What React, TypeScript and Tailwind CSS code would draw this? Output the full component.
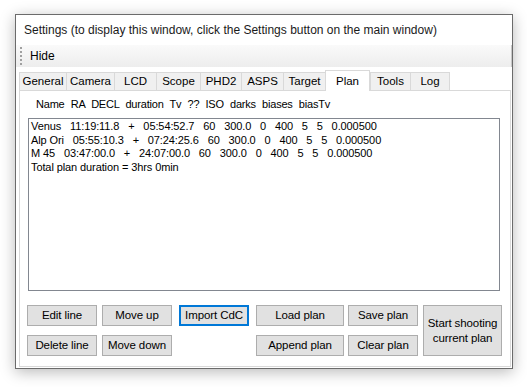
import React from "react";

const tabs: { label: string; w: number }[] = [
  { label: "General", w: 47 },
  { label: "Camera", w: 48 },
  { label: "LCD", w: 42 },
  { label: "Scope", w: 44 },
  { label: "PHD2", w: 41 },
  { label: "ASPS", w: 42 },
  { label: "Target", w: 42 },
  { label: "Plan", w: 45 },
  { label: "Tools", w: 40 },
  { label: "Log", w: 40 },
];

const lines = [
  "Venus   11:19:11.8   +   05:54:52.7   60   300.0   0   400   5   5   0.000500",
  "Alp Ori   05:55:10.3   +   07:24:25.6   60   300.0   0   400   5   5   0.000500",
  "M 45   03:47:00.0   +   24:07:00.0   60   300.0   0   400   5   5   0.000500",
  "Total plan duration = 3hrs 0min",
];

function Btn({
  children,
  className = "",
  focused = false,
}: {
  children: React.ReactNode;
  className?: string;
  focused?: boolean;
}) {
  return (
    <div
      className={
        "flex items-center justify-center bg-[#e1e1e1] text-[11.5px] leading-[15px] text-black text-center tracking-[-0.1px] " +
        (focused ? "border-2 border-[#0078d7] " : "border border-[#adadad] ") +
        className
      }
    >
      {children}
    </div>
  );
}

export default function App() {
  return (
    <div
      className="w-[527px] h-[387px] bg-white pt-[14px] pl-[15px]"
      style={{ fontFamily: '"Liberation Sans", Arial, sans-serif' }}
    >
      <div className="w-[498px] h-[355px] border border-[#6b6b6b] bg-white shadow-[0_3px_14px_rgba(0,0,0,0.28)] flex flex-col">
        {/* title */}
        <div className="h-[30px] flex items-center pl-[8px] text-[12px] text-[#1a1a1a]">
          Settings (to display this window, click the Settings button on the main window)
        </div>
        {/* toolbar */}
        <div className="h-[22px] flex items-center bg-gradient-to-b from-[#fafafa] to-[#ededed] relative">
          <div className="ml-[4px] flex flex-col gap-[2px]">
            {[0, 1, 2, 3, 4].map((i) => (
              <div key={i} className="w-[2px] h-[2px] bg-[#a0a0a0]" />
            ))}
          </div>
          <div className="ml-[8px] text-[12px] text-black">Hide</div>
          <div className="absolute right-0 top-0 w-[1px] h-[22px] bg-[#c8c8c8]" />
        </div>
        {/* tab control */}
        <div className="flex-1 flex flex-col pl-[3px] pr-[1px] pt-[3px] pb-[1px]">
          <div className="flex items-end h-[20px] relative z-10 text-[11.5px]">
            {tabs.map((t, i) =>
              t.label === "Plan" ? (
                <div
                  key={t.label}
                  style={{ width: t.w }}
                  className="h-[21px] -mb-[1px] bg-white border border-[#d9d9d9] border-b-0 text-black flex justify-center pt-[2px]"
                >
                  {t.label}
                </div>
              ) : (
                <div
                  key={t.label}
                  style={{ width: t.w }}
                  className={
                    "h-[18px] bg-[#f0f0f0] border-t border-l border-[#d9d9d9] text-black flex items-center justify-center " +
                    (i === tabs.length - 1 ? "border-r" : "")
                  }
                >
                  {t.label}
                </div>
              )
            )}
          </div>
          <div className="flex-1 border border-[#d9d9d9] bg-white flex flex-col">
            <div className="h-[27px] flex items-center pl-[16px] text-[11px] text-black tracking-[-0.2px] [word-spacing:3.3px]">
              Name RA DECL duration Tv ?? ISO darks biases biasTv
            </div>
            <div className="ml-[8px] w-[472px] h-[173px] border border-[#828790] bg-white pt-[1px] pl-[2px]">
              {lines.map((l, i) => (
                <div key={i} className="whitespace-pre text-[11px] leading-[13.5px] text-black tracking-[-0.1px]">
                  {l}
                </div>
              ))}
            </div>
            <div className="flex mt-[14px] ml-[7px] gap-[5px]">
              <div className="flex flex-col gap-[9px]">
                <Btn className="w-[70px] h-[21px]">Edit line</Btn>
                <Btn className="w-[70px] h-[21px]">Delete line</Btn>
              </div>
              <div className="flex flex-col gap-[9px]">
                <Btn className="w-[70px] h-[21px]">Move up</Btn>
                <Btn className="w-[70px] h-[21px]">Move down</Btn>
              </div>
              <div className="flex flex-col ml-[2px]">
                <Btn focused className="w-[70px] h-[21px]">Import CdC</Btn>
              </div>
              <div className="flex flex-col gap-[9px] ml-[2px]">
                <Btn className="w-[88px] h-[21px]">Load plan</Btn>
                <Btn className="w-[88px] h-[21px]">Append plan</Btn>
              </div>
              <div className="flex flex-col gap-[9px] -ml-[1px]">
                <Btn className="w-[70px] h-[21px]">Save plan</Btn>
                <Btn className="w-[70px] h-[21px]">Clear plan</Btn>
              </div>
              <Btn className="w-[79px] h-[51px]">
                Start shooting
                <br />
                current plan
              </Btn>
            </div>
          </div>
        </div>
      </div>
    </div>
  );
}
